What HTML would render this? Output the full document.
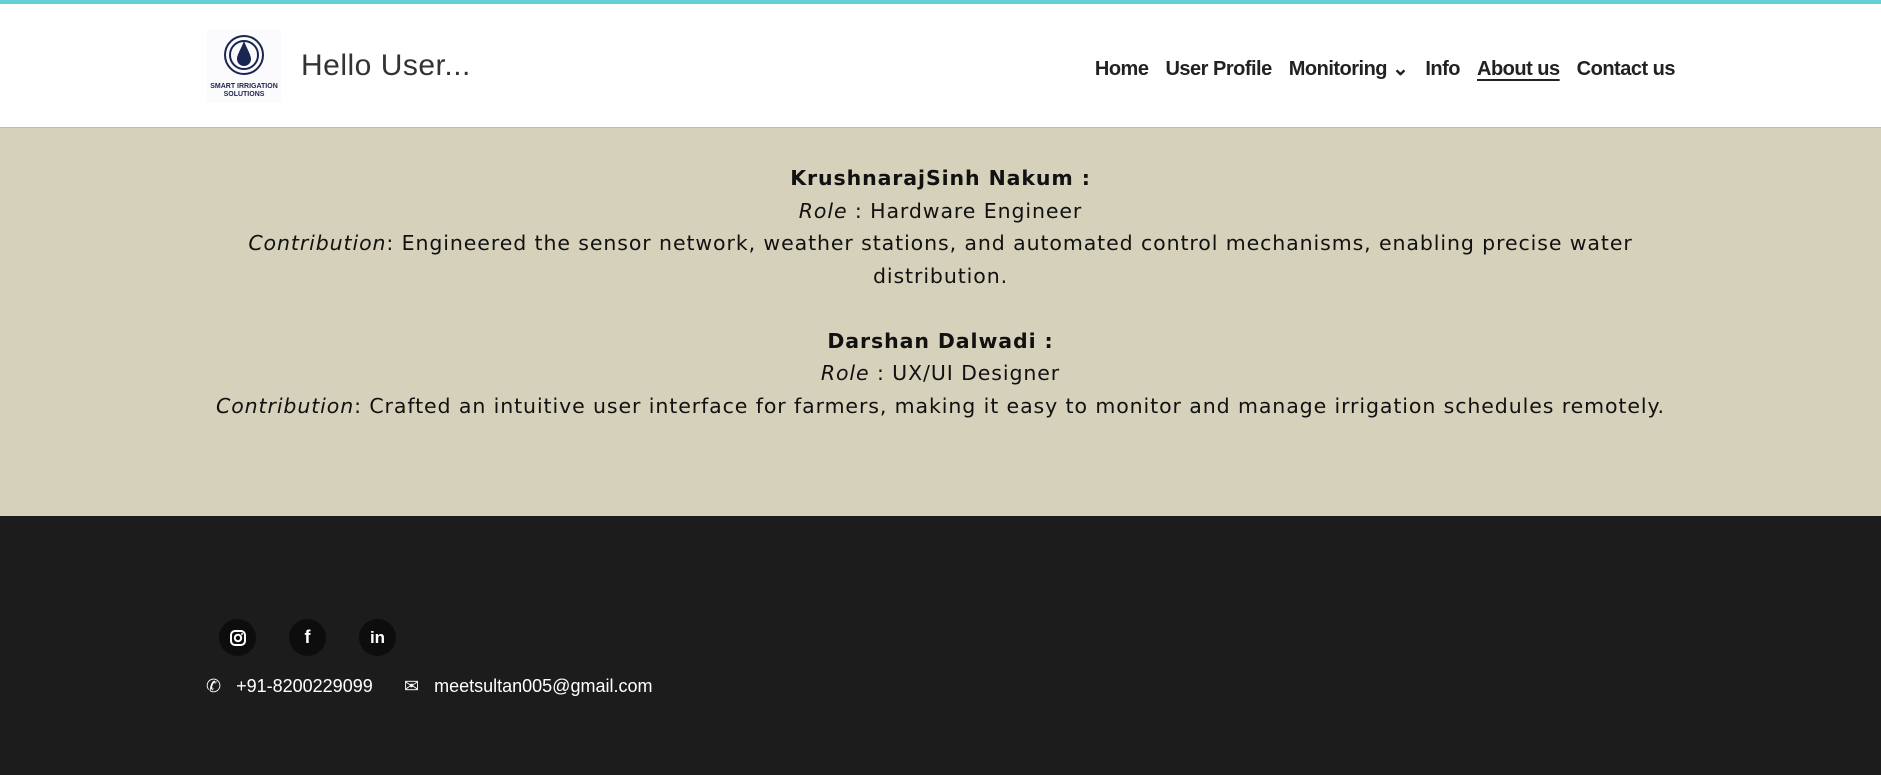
<!DOCTYPE html>
<html><head><meta charset="utf-8"><style>
*{margin:0;padding:0;box-sizing:border-box}
body{width:1881px;height:775px;overflow:hidden;font-family:"Liberation Sans",sans-serif;background:#1c1c1c}
.top{height:4px;background:#62d0d4}
header{height:124px;background:#fff;position:relative;border-bottom:1px solid #bbb}
.logo{position:absolute;left:207px;top:25px;width:74px;height:74px;background:#fbfbfd;text-align:center}
.logo .t{font-size:7px;font-weight:bold;color:#1a2550;line-height:8px;margin-top:1px}
.hello{position:absolute;left:301px;top:45px;font-size:30px;color:#333;letter-spacing:0.5px}
nav{position:absolute;right:206px;top:52px;font-size:20px;font-weight:bold;color:#222;letter-spacing:-0.5px}
nav span{margin-left:17px}
nav u{text-underline-offset:4px}
.main{height:388px;background:#d6d1bb;text-align:center;font-family:"DejaVu Sans",sans-serif;font-size:20.5px;letter-spacing:0.9px;line-height:32.5px;color:#111;padding-top:34px;white-space:nowrap}
footer{position:relative;height:259px}
.ic{position:absolute;top:103px;width:37px;height:37px;border-radius:50%;background:#0d0d0d;color:#fff;text-align:center;line-height:37px;font-weight:bold;font-size:18px}
.ct{position:absolute;color:#fff;font-size:18px}
</style></head><body>
<div class="top"></div>
<header>
<div class="logo">
<svg width="44" height="44" viewBox="0 0 44 44" style="margin-top:4px"><circle cx="22" cy="22" r="19" fill="none" stroke="#1a2550" stroke-width="2"/><circle cx="22" cy="22" r="14" fill="none" stroke="#1a2550" stroke-width="2"/><path d="M22 8 C18 18 15 22 15 26 a7 7 0 0 0 14 0 C29 22 26 18 22 8z" fill="#1a2550"/></svg>
<div class="t">SMART IRRIGATION<br>SOLUTIONS</div>
</div>
<div class="hello">Hello User...</div>
<nav><span>Home</span><span>User Profile</span><span>Monitoring ⌄</span><span>Info</span><span><u>About us</u></span><span>Contact us</span></nav>
</header>
<div class="main">
<b>KrushnarajSinh Nakum :</b><br><i>Role</i> : Hardware Engineer<br><i>Contribution</i>: Engineered the sensor network, weather stations, and automated control mechanisms, enabling precise water<br>distribution.<br><br>
<b>Darshan Dalwadi :</b><br><i>Role</i> : UX/UI Designer<br><i>Contribution</i>: Crafted an intuitive user interface for farmers, making it easy to monitor and manage irrigation schedules remotely.
</div>
<footer>
<div class="ic" style="left:219px"><svg width="18" height="18" viewBox="0 0 18 18" style="margin-top:10px"><rect x="2" y="2" width="14" height="14" rx="4" fill="none" stroke="#fff" stroke-width="2"/><circle cx="9" cy="9" r="3.2" fill="none" stroke="#fff" stroke-width="2"/><circle cx="13" cy="5" r="1" fill="#fff"/></svg></div>
<div class="ic" style="left:289px">f</div>
<div class="ic" style="left:359px;font-size:17px">in</div>
<div class="ct" style="left:206px;top:160px">✆&nbsp;&nbsp; +91-8200229099</div>
<div class="ct" style="left:404px;top:160px">✉&nbsp;&nbsp; meetsultan005@gmail.com</div>
</footer>
</body></html>
